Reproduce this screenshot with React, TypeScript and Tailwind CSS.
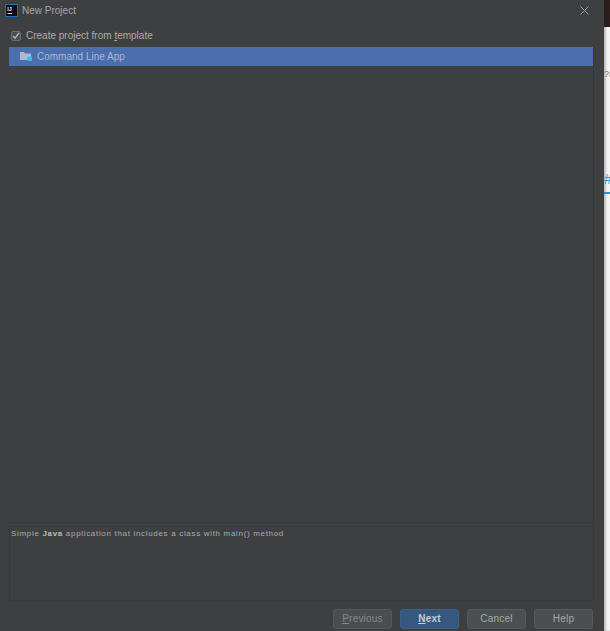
import { FC } from 'react';

const font = { fontFamily: '"Liberation Sans", sans-serif' };

const Button: FC<{ label: string; mnemonic?: string; rest?: string; tone?: string }> = ({
  label,
  mnemonic,
  rest,
  tone = 'border-[#56595b] bg-[#4c4f51] text-[#a4a8aa]',
}) => (
  <button className={`w-[59px] h-[20px] rounded-[3px] border text-[10px] leading-none tracking-[0.2px] ${tone}`}>
    {mnemonic ? (
      <>
        <span className="underline">{mnemonic}</span>
        {rest}
      </>
    ) : (
      label
    )}
  </button>
);

export default function App() {
  return (
    <div className="w-[610px] h-[631px] flex bg-[#f4f4f4] overflow-hidden" style={font}>
      <div className="w-[604px] shrink-0 h-full flex flex-col bg-[#3e3f41] text-[#b4b7b9]">
        <header className="h-[21px] flex items-center pl-[5px] pr-[14px] shrink-0">
          <svg width="13" height="13" viewBox="0 0 13 13" className="shrink-0">
            <rect width="13" height="13" fill="#1d6fc0" />
            <rect x="1" y="1" width="11" height="11" fill="#0b0d12" />
            <text x="2.2" y="7" fontSize="5.5" fontWeight="700" fill="#e8e8e8" fontFamily="Liberation Sans">
              IJ
            </text>
            <rect x="2.5" y="9" width="4.5" height="1" fill="#d8d8d8" />
          </svg>
          <span className="ml-[4px] text-[10px] text-[#a4a7a9]">New Project</span>
          <svg width="9" height="9" viewBox="0 0 9 9" className="ml-auto -translate-x-[1px]" stroke="#9a9d9f" strokeWidth="1">
            <path d="M.5.5l8 8M8.5.5l-8 8" fill="none" />
          </svg>
        </header>

        <label className="h-[17px] mt-[6px] flex items-center pl-[11px] gap-[5px] text-[10px] text-[#a9acae] shrink-0">
          <span className="w-[10px] h-[10px] rounded-[2px] border border-[#6b6e70] bg-[#4a4d4f] flex items-center justify-center">
            <svg width="8" height="8" viewBox="0 0 8 8" fill="none" stroke="#b9bcbe" strokeWidth="1.3">
              <path d="M1 4l2 2.2L7 1" />
            </svg>
          </span>
          <span>
            Create project from <span className="underline">t</span>emplate
          </span>
        </label>

        <section className="mt-[3px] ml-[9px] mr-[10px] h-[476px] shrink-0 border-r border-b border-[#353638]">
          <div className="h-[19px] flex items-center pl-[11px] gap-[5px] bg-[#4b6eaf] text-[10px] text-[#a9b7ce]">
            <svg width="12" height="11" viewBox="0 0 12 11" className="shrink-0">
              <path d="M0 1h4l1 1.5h6V9H0z" fill="#a9bcd2" />
              <rect x="7.5" y="5.5" width="4.5" height="4.5" fill="#37bde8" />
            </svg>
            <span>Command Line App</span>
          </div>
        </section>

        <section className="mt-[3px] ml-[9px] mr-[10px] h-[75px] shrink-0 border border-[#38393b] px-[1px] pt-[1px] text-[8px] tracking-[0.68px] leading-[11px] text-[#a9acae]">
          Simple <b className="text-[#bbbec0]">Java</b> application that includes a class with main() method
        </section>

        <footer className="flex justify-end gap-[8px] pr-[11px] mt-[8px]">
          <Button label="Previous" mnemonic="P" rest="revious" tone="border-[#55585a] bg-[#4a4e50] text-[#85898b]" />
          <Button label="Next" mnemonic="N" rest="ext" tone="border-[#3d6185] bg-[#365880] text-[#c5ccd3] font-bold" />
          <Button label="Cancel" />
          <Button label="Help" />
        </footer>
      </div>
      <aside className="flex-1 min-w-0 flex flex-col overflow-hidden shadow-[inset_2px_0_2px_#bdbdbd]">
        <div className="h-[27px] bg-[#2a1d1c]" />
        <div className="h-[33px]" />
        <div className="h-[42px] text-[9px] text-[#777] whitespace-nowrap pt-[8px] overflow-hidden">
          ?a
        </div>
        <div className="mt-[62px] h-[30px] text-[14px] leading-[30px] text-[#1f9ad6] border-b-2 border-[#1f9ad6] overflow-hidden">
          #
        </div>
      </aside>
    </div>
  );
}
